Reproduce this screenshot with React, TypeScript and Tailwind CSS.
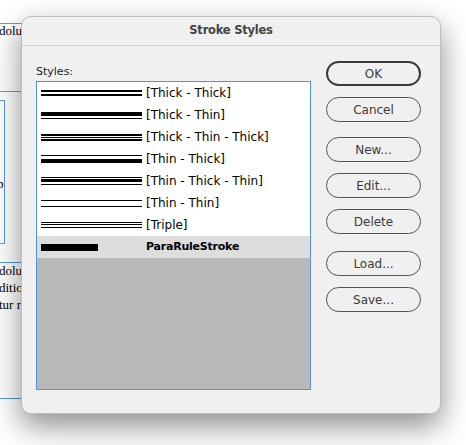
import React from 'react';

type Stroke = { name: string; parts: number[]; width?: number; bold?: boolean };

// parts alternate line / gap heights, starting with a line
const strokes: Stroke[] = [
  { name: '[Thick - Thick]', parts: [2, 2, 2] },
  { name: '[Thick - Thin]', parts: [4, 2, 1] },
  { name: '[Thick - Thin - Thick]', parts: [2, 1, 1, 1, 2] },
  { name: '[Thin - Thick]', parts: [1, 3, 4] },
  { name: '[Thin - Thick - Thin]', parts: [1, 1, 3, 2, 1] },
  { name: '[Thin - Thin]', parts: [1, 5, 1] },
  { name: '[Triple]', parts: [1, 1, 1, 2, 1] },
  { name: 'ParaRuleStroke', parts: [7], width: 57, bold: true },
];

const buttons = [
  { label: 'OK', mt: 'mt-[15px]', primary: true },
  { label: 'Cancel', mt: 'mt-[11px]' },
  { label: 'New...', mt: 'mt-[15px]' },
  { label: 'Edit...', mt: 'mt-[11px]' },
  { label: 'Delete', mt: 'mt-[11px]' },
  { label: 'Load...', mt: 'mt-[17px]' },
  { label: 'Save...', mt: 'mt-[11px]' },
];

const ui = { fontFamily: '"DejaVu Sans", Verdana, sans-serif' };
const serif = { fontFamily: '"Liberation Serif", "Times New Roman", serif' };

function Sample({ stroke }: { stroke: Stroke }) {
  return (
    <div className="flex w-[101px] shrink-0 flex-col">
      {stroke.parts.map((h, i) => (
        <div
          key={i}
          className={i % 2 === 0 ? 'bg-black' : ''}
          style={{ height: h, width: stroke.width ?? 101 }}
        />
      ))}
    </div>
  );
}

function Document() {
  return (
    <div className="absolute inset-0 overflow-hidden bg-white" style={serif}>
      <div className="absolute left-0 top-[23px] w-[120px] border-t border-[#5b9be0]" />
      <div className="absolute left-[-1px] top-[22px] text-[13px] leading-[17px] text-black">dolupta</div>
      <div className="absolute left-0 top-[91px] w-[120px] border-t border-[#5b9be0]" />
      <div className="absolute left-[-20px] top-[100px] h-[144px] w-[25px] border border-[#5b9be0]" />
      <div className="absolute left-[-3px] top-[174px] text-[13px] text-black">p</div>
      <div className="absolute left-0 top-[262px] w-[120px] border-t border-[#5b9be0]" />
      <div className="absolute left-[-1px] top-[262px] text-[13px] leading-[17px] text-black">
        <div>dolupta</div>
        <div>ditione</div>
        <div>tur re</div>
      </div>
      <div className="absolute left-0 top-[398px] w-[120px] border-t border-[#5b9be0]" />
    </div>
  );
}

export default function App() {
  return (
    <div className="relative h-[445px] w-[466px] overflow-hidden bg-white">
      <Document />

      <div
        className="absolute left-[21px] top-[16px] flex h-[398px] w-[420px] flex-col rounded-[10px] border border-[#bdbdbd] bg-[#f0f0f0] shadow-[0_12px_30px_rgba(0,0,0,0.45)]"
        style={ui}
      >
        {/* Title bar */}
        <div className="flex h-[29px] shrink-0 items-center justify-center border-b border-[#d2d2d2]">
          <span className="text-[11.5px] font-bold tracking-[-0.02em] text-[#444]">Stroke Styles</span>
        </div>

        <div className="flex flex-1 pl-[14px] pr-[19px]">
          {/* Styles list */}
          <div className="flex flex-col">
            <div className="mt-[19px] text-[11px] leading-[14px] text-[#222]">Styles:</div>
            <div className="mt-[2px] flex h-[309px] w-[275px] flex-col border border-[#4d92e3] bg-[#b8b8b8]">
              {strokes.map((s) => (
                <div
                  key={s.name}
                  className={`flex h-[22px] shrink-0 items-center pl-[4px] ${s.bold ? 'bg-[#dddddd]' : 'bg-white'}`}
                >
                  <Sample stroke={s} />
                  <span
                    className={`ml-[4px] whitespace-nowrap text-black ${
                      s.bold ? 'text-[11px] font-bold tracking-[-0.02em]' : 'text-[12px]'
                    }`}
                  >
                    {s.name}
                  </span>
                </div>
              ))}
            </div>
          </div>

          {/* Buttons */}
          <div className="ml-[15px] flex flex-col">
            {buttons.map((b) => (
              <button
                key={b.label}
                className={`${b.mt} flex h-[25px] w-[95px] items-center justify-center rounded-full bg-[#f0f0f0] text-[12px] text-[#3c3c3c] ${
                  b.primary ? 'border-2 border-[#3a3a3a]' : 'border border-[#555]'
                }`}
              >
                {b.label}
              </button>
            ))}
          </div>
        </div>
      </div>
    </div>
  );
}
